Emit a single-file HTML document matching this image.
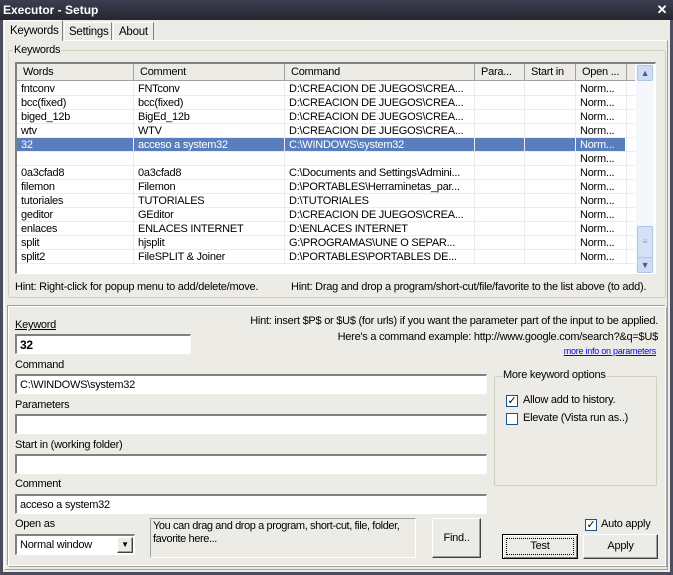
<!DOCTYPE html>
<html><head><meta charset="utf-8"><style>
*{box-sizing:border-box;margin:0;padding:0}
body{width:673px;height:575px;overflow:hidden;background:#4a4e5e;font-family:"Liberation Sans",sans-serif;font-size:11px;letter-spacing:-0.25px;color:#000;position:relative}
.a{position:absolute}
#win{left:3px;top:20px;width:667px;height:552px;background:#ecebe6}
#title{left:0;top:0;width:673px;height:20px;background:linear-gradient(#3c3f50,#24262f);color:#fff;font-weight:bold;font-size:12px;padding:3px 0 0 3px;letter-spacing:0}
.in{border-top:2px solid #808080;border-left:2px solid #808080;border-bottom:1px solid #fff;border-right:1px solid #fff;background:#fff}
.grp{border:1px solid #d0d0bf;border-radius:2px}
.lbl{background:#ecebe6;padding:0 1px}
.cell{position:absolute;white-space:nowrap;overflow:hidden}
.btn{background:#ecebe6;border:1px solid #fff;border-right-color:#404040;border-bottom-color:#404040;box-shadow:inset -1px -1px #a0a0a0;text-align:center}
.cb{width:12px;height:12px;border:1px solid #1c5180;background:#fff;font-size:11px;line-height:10px;text-align:center}
</style></head><body>
<div class="a" id="title">Executor - Setup</div>
<div class="a" style="left:656px;top:4px;width:12px;height:12px;color:#fff;font-weight:bold;font-size:13px;line-height:12px;text-align:center">✕</div>
<div class="a" id="win"></div>
<div class="a" style="left:4px;top:40px;width:664px;height:530px;border:1px solid #a0a0a0;border-top-color:#fff;border-left-color:#fff"></div>
<div class="a" style="left:4px;top:20px;width:59px;height:21px;background:#ecebe6;border:1px solid #fff;border-right-color:#808080;border-bottom:none;padding:4px 0 0 5px;font-size:11.5px">Keywords</div>
<div class="a" style="left:64px;top:22px;width:48px;height:18px;border:1px solid #fff;border-right-color:#808080;border-bottom:none;padding:3px 0 0 4px;font-size:11.5px">Settings</div>
<div class="a" style="left:113px;top:22px;width:41px;height:18px;border:1px solid #fff;border-right-color:#808080;border-bottom:none;padding:3px 0 0 5px;font-size:11.5px">About</div>
<div class="a grp" style="left:8px;top:50px;width:658px;height:248px"></div>
<div class="a lbl" style="left:13px;top:44px">Keywords</div>
<div class="a in" style="left:15px;top:62px;width:641px;height:212px"></div>
<div class="a" style="left:17px;top:64px;width:618px;height:17px;background:#ecebe6;border-bottom:1px solid #a0a0a0"></div>
<div id="list"></div>
<div class="a" style="left:636px;top:64px;width:18px;height:209px;background:#f4f7fb"></div>
<div class="a" style="left:637px;top:65px;width:16px;height:16px;border:1px solid #aec4ea;border-radius:2px;background:#cfdcf4;color:#4d6185;font-size:9px;text-align:center;line-height:14px">▲</div>
<div class="a" style="left:637px;top:226px;width:16px;height:32px;border:1px solid #aec4ea;border-radius:2px;background:#d4e0f6;color:#8a9cc0;font-size:8px;text-align:center;line-height:30px">≡</div>
<div class="a" style="left:637px;top:257px;width:16px;height:16px;border:1px solid #aec4ea;border-radius:2px;background:#cfdcf4;color:#4d6185;font-size:9px;text-align:center;line-height:14px">▼</div>
<div class="a" style="left:15px;top:281px">Hint: Right-click for popup menu to add/delete/move.</div>
<div class="a" style="left:291px;top:281px">Hint: Drag and drop a program/short-cut/file/favorite to the list above (to add).</div>
<div class="a" style="left:8px;top:306px;width:658px;height:260px;border:1px solid #fff;box-shadow:-1px -1px #a0a0a0 , 1px 1px #a0a0a0"></div>
<div class="a" style="left:15px;top:319px;text-decoration:underline">Keyword</div>
<div class="a in" style="left:15px;top:334px;width:176px;height:20px;font-weight:bold;font-size:12px;padding:2px 0 0 3px">32</div>
<div class="a" style="right:15px;top:315px">Hint: insert $P$ or $U$ (for urls) if you want the parameter part of the input to be applied.</div>
<div class="a" style="right:15px;top:331px">Here's a command example: http://www.google.com/search?&amp;q=$U$</div>
<div class="a" style="right:17px;top:346px;font-size:9px;color:#0000ff;text-decoration:underline">more info on parameters</div>
<div class="a" style="left:15px;top:359px">Command</div>
<div class="a in" style="left:15px;top:374px;width:472px;height:20px;padding:3px 0 0 3px">C:\WINDOWS\system32</div>
<div class="a" style="left:15px;top:399px">Parameters</div>
<div class="a in" style="left:15px;top:414px;width:472px;height:20px"></div>
<div class="a" style="left:15px;top:439px">Start in (working folder)</div>
<div class="a in" style="left:15px;top:454px;width:472px;height:20px"></div>
<div class="a" style="left:15px;top:478px">Comment</div>
<div class="a in" style="left:15px;top:494px;width:472px;height:20px;padding:3px 0 0 3px">acceso a system32</div>
<div class="a grp" style="left:494px;top:376px;width:163px;height:110px"></div>
<div class="a lbl" style="left:502px;top:369px">More keyword options</div>
<div class="a cb" style="left:506px;top:395px">✓</div>
<div class="a" style="left:523px;top:394px">Allow add to history.</div>
<div class="a cb" style="left:506px;top:413px"></div>
<div class="a" style="left:523px;top:412px">Elevate (Vista run as..)</div>
<div class="a" style="left:15px;top:518px">Open as</div>
<div class="a in" style="left:15px;top:534px;width:120px;height:21px;padding:3px 0 0 3px">Normal window</div>
<div class="a btn" style="left:117px;top:537px;width:16px;height:16px;font-size:8px;line-height:14px">▼</div>
<div class="a" style="left:150px;top:518px;width:266px;height:40px;border:1px solid #a0a0a0;border-right-color:#fff;border-bottom-color:#fff;padding:1px 2px;line-height:13px;letter-spacing:-0.4px">You can drag and drop a program, short-cut, file, folder, favorite here...</div>
<div class="a btn" style="left:432px;top:518px;width:49px;height:40px;line-height:38px">Find..</div>
<div class="a cb" style="left:585px;top:519px">✓</div>
<div class="a" style="left:601px;top:518px">Auto apply</div>
<div class="a btn" style="left:502px;top:534px;width:76px;height:25px;border:1px solid #000;box-shadow:inset 1px 1px #fff,inset -1px -1px #808080"><div class="a" style="left:3px;top:3px;width:68px;height:17px;border:1px dotted #000;line-height:15px;text-align:center">Test</div></div>
<div class="a btn" style="left:583px;top:534px;width:75px;height:25px;line-height:23px">Apply</div>
<script>
var cols=[17,134,285,475,525,576,627];
var h=["Words","Comment","Command","Para...","Start in","Open ..."];
var L=document.getElementById('list'),s='';
for(var i=0;i<6;i++){s+='<div class="cell" style="left:'+cols[i]+'px;top:64px;width:'+(cols[i+1]-cols[i])+'px;height:17px;border-right:1px solid #a0a0a0;padding:2px 0 0 6px">'+h[i]+'</div>';}
var C='D:\\CREACION DE JUEGOS\\CREA...';
var r=[["fntconv","FNTconv",C],["bcc(fixed)","bcc(fixed)",C],["biged_12b","BigEd_12b",C],["wtv","WTV",C],["32","acceso a system32","C:\\WINDOWS\\system32"],["","",""],["0a3cfad8","0a3cfad8","C:\\Documents and Settings\\Admini..."],["filemon","Filemon","D:\\PORTABLES\\Herraminetas_par..."],["tutoriales","TUTORIALES","D:\\TUTORIALES"],["geditor","GEditor",C],["enlaces","ENLACES INTERNET","D:\\ENLACES INTERNET"],["split","hjsplit","G:\\PROGRAMAS\\UNE O SEPAR..."],["split2","FileSPLIT &amp; Joiner","D:\\PORTABLES\\PORTABLES DE..."]];
for(var j=0;j<13;j++){var y=82+j*14;var sel=j==4;
if(sel)s+='<div class="a" style="left:17px;top:'+y+'px;width:608px;height:14px;background:#5a7dbd"></div>';
s+='<div class="a" style="left:17px;top:'+(y+13)+'px;width:618px;height:1px;background:#ececec"></div>';
var v=[r[j][0],r[j][1],r[j][2],"","","Norm..."];
for(var i=0;i<6;i++)s+='<div class="cell" style="left:'+cols[i]+'px;top:'+y+'px;width:'+(cols[i+1]-cols[i])+'px;height:14px;border-right:1px solid #ececec;padding:1px 0 0 4px;color:'+(sel?'#fff':'#000')+'">'+v[i]+'</div>';}
L.innerHTML=s;
</script>
</body></html>
